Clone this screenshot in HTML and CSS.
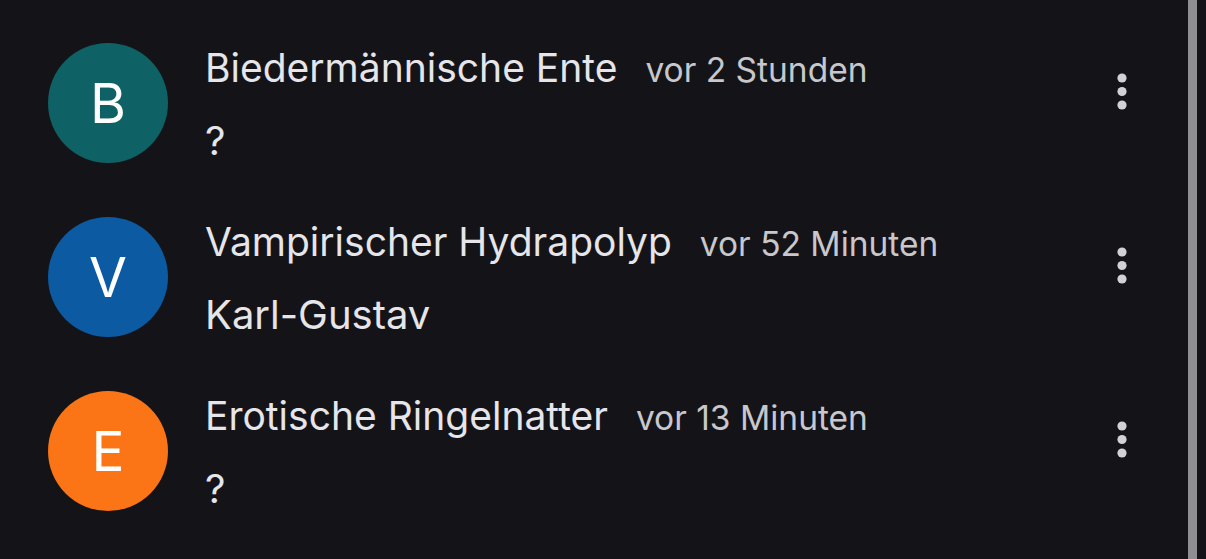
FILE: index.html
```html
<!DOCTYPE html>
<html lang="de">
<head>
<meta charset="utf-8">
<title>Chats</title>
<link rel="stylesheet" href="styles.css">
</head>
<body>
<div class="screen">
  <ul class="list">
    <li class="row">
      <div class="avatar teal">B</div>
      <div class="content">
        <div class="head"><span class="name">Biedermännische Ente</span><span class="time">vor 2 Stunden</span></div>
        <div class="msg">?</div>
      </div>
      <button class="menu" aria-label="Mehr">
        <svg width="10" height="37" viewBox="0 0 10 37"><circle cx="5" cy="5" r="4.6"/><circle cx="5" cy="18.5" r="4.6"/><circle cx="5" cy="32" r="4.6"/></svg>
      </button>
    </li>
    <li class="row">
      <div class="avatar blue">V</div>
      <div class="content">
        <div class="head"><span class="name">Vampirischer Hydrapolyp</span><span class="time">vor 52 Minuten</span></div>
        <div class="msg">Karl-Gustav</div>
      </div>
      <button class="menu" aria-label="Mehr">
        <svg width="10" height="37" viewBox="0 0 10 37"><circle cx="5" cy="5" r="4.6"/><circle cx="5" cy="18.5" r="4.6"/><circle cx="5" cy="32" r="4.6"/></svg>
      </button>
    </li>
    <li class="row">
      <div class="avatar orange">E</div>
      <div class="content">
        <div class="head"><span class="name">Erotische Ringelnatter</span><span class="time">vor 13 Minuten</span></div>
        <div class="msg">?</div>
      </div>
      <button class="menu" aria-label="Mehr">
        <svg width="10" height="37" viewBox="0 0 10 37"><circle cx="5" cy="5" r="4.6"/><circle cx="5" cy="18.5" r="4.6"/><circle cx="5" cy="32" r="4.6"/></svg>
      </button>
    </li>
  </ul>
  <div class="scrollbar"></div>
</div>
</body>
</html>
```
FILE: styles.css
```css
html, body {
  margin: 0;
  padding: 0;
  background: #141418;
  height: 100%;
  overflow: hidden;
}
body {
  font-family: Inter, "Noto Sans", sans-serif;
  color: #e5e5ea;
}
.screen {
  display: flex;
  height: 559px;
}
.list {
  list-style: none;
  margin: 0;
  padding: 16px 0 0 0;
  flex: 1;
}
.row {
  display: flex;
  align-items: center;
  height: 174px;
  padding-left: 48px;
}
.avatar {
  width: 120px;
  height: 120px;
  border-radius: 50%;
  display: flex;
  align-items: center;
  justify-content: center;
  color: #ffffff;
  font-size: 55px;
  flex-shrink: 0;
}
.teal { background: #0e6165; }
.blue { background: #0b5aa2; }
.orange { background: #fb7416; }
.content {
  flex: 1;
  margin-left: 37px;
  display: flex;
  flex-direction: column;
  gap: 27px;
  padding-top: 3px;
}
.head {
  display: flex;
  align-items: baseline;
  gap: 28px;
  line-height: 44px;
}
.name {
  font-size: 39px;
  color: #e5e5ea;
}
.time {
  font-size: 33.5px;
  color: #c7c7cc;
}
.msg {
  font-size: 40px;
  line-height: 44px;
  color: #e5e5ea;
}
.menu {
  background: none;
  border: 0;
  padding: 0;
  width: 48px;
  height: 48px;
  margin-right: 42px;
  margin-bottom: 24px;
  display: flex;
  align-items: center;
  justify-content: center;
  fill: #d1d1d6;
}
.scrollbar {
  width: 9px;
  margin-right: 9px;
  background: #8e8e93;
}
```
